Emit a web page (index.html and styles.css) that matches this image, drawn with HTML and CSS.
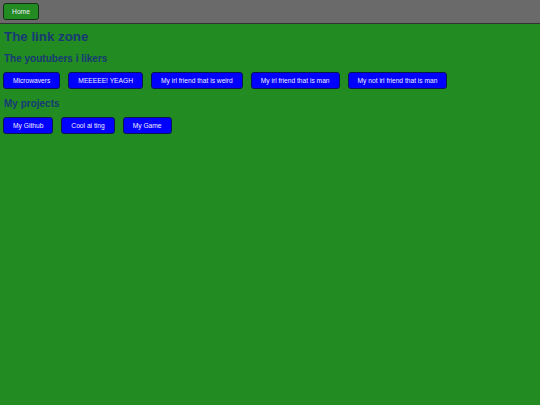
FILE: index.html
```html
<!DOCTYPE html>
<html>
<head>
<meta charset="utf-8">
<link rel="stylesheet" href="styles.css">
</head>
<body>
<header class="topbar">
  <button class="btn btn-home">Home</button>
</header>
<main class="content">
  <h1 class="title">The link zone</h1>
  <h2 class="section">The youtubers i likers</h2>
  <div class="links">
    <button class="btn btn-link">Microwavers</button>
    <button class="btn btn-link">MEEEEE! YEAGH</button>
    <button class="btn btn-link">My irl friend that is weird</button>
    <button class="btn btn-link">My irl friend that is man</button>
    <button class="btn btn-link">My not irl friend that is man</button>
  </div>
  <h2 class="section">My projects</h2>
  <div class="links">
    <button class="btn btn-link">My Github</button>
    <button class="btn btn-link">Cool ai ting</button>
    <button class="btn btn-link">My Game</button>
  </div>
</main>
</body>
</html>
```

FILE: styles.css
```css
html, body {
  margin: 0;
  padding: 0;
}
body {
  background: #228b22;
  font-family: "Liberation Sans", Arial, sans-serif;
  min-height: 405px;
}
.topbar {
  display: flex;
  align-items: flex-start;
  background: #6a6a6a;
  height: 24px;
  border-bottom: 1px solid #333;
  padding: 3px 3px 0;
  box-sizing: border-box;
}
.btn {
  font-family: "Liberation Sans", Arial, sans-serif;
  font-size: 6.67px;
  line-height: 8px;
  color: #f0f0ff;
  border: 1px solid #1f2a3a;
  border-radius: 3px;
  box-sizing: border-box;
  height: 17px;
  padding: 0 9px;
  cursor: pointer;
  margin: 0;
}
.btn-home {
  background: #228b22;
  width: 36px;
  padding: 0;
  border-color: #143014;
}
.content {
  padding: 0 3px;
}
.title {
  margin: 4px 0 0 1px;
  font-size: 13.33px;
  line-height: 18px;
  color: #183a74;
}
.section {
  margin: 6px 0 0 1px;
  font-size: 10px;
  line-height: 14px;
  color: #183a74;
}
.links {
  display: flex;
  gap: 8px;
  margin: 6px 0 8px;
}
.btn-link {
  background: #0000ff;
  border-color: #0a1650;
}
```
